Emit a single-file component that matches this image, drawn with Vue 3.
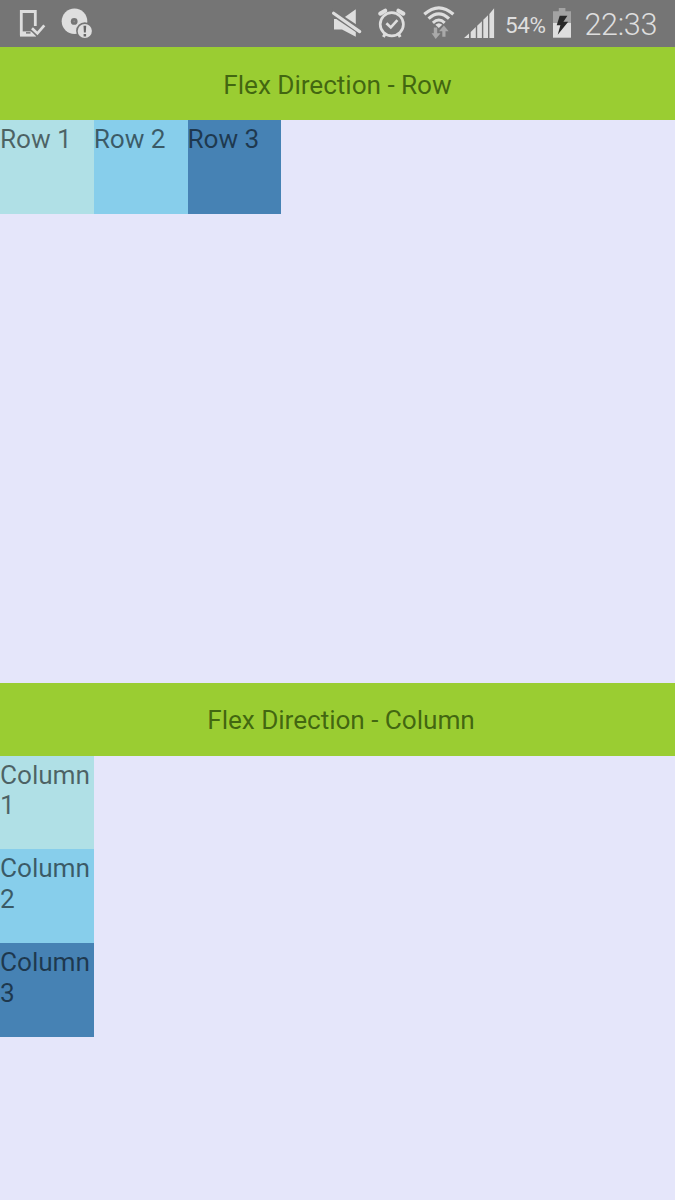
<script setup>
const boxes = [1, 2, 3]
</script>

<template>
  <div class="screen">
    <div class="status">
      <svg class="icons" width="500" height="47" viewBox="0 0 500 47">
        <g fill="none" stroke="#dedede">
          <path d="M21.3 35.2V11.5H35.3V26" stroke-width="2.8" />
          <path d="M20 34H36" stroke-width="5.2" />
          <path d="M32.2 28.2L37.4 33.4L44.2 25.4" stroke="#757575" stroke-width="6" />
          <path d="M32 28.2L37.4 33.4L44.3 25.3" stroke-width="2.7" />
        </g>
        <path d="M26 32.1H30.5V33.6H26Z" fill="#757575" />
        <circle cx="74.5" cy="21.3" r="12.8" fill="#dedede" />
        <circle cx="74.2" cy="21.4" r="3.4" fill="#757575" />
        <circle cx="74.2" cy="21.4" r="0.9" fill="#8d8d8d" />
        <circle cx="84.8" cy="31" r="8.7" fill="#757575" />
        <circle cx="84.8" cy="31" r="7.1" fill="#dedede" />
        <path d="M83.5 25.8H86.2L85.8 32.5H83.9Z M83.6 34H86.1V36.4H83.6Z" fill="#666" />

        <path d="M334 19H342L355.8 9.3V36.8L342 29.5H334Z" fill="#dedede" />
        <path d="M331 11.5L362 32.2" stroke="#757575" stroke-width="6.5" />
        <path d="M333.6 13.2L359.7 31.6" stroke="#dedede" stroke-width="3.2" stroke-linecap="round" />

        <g fill="none" stroke="#dedede">
          <circle cx="391.8" cy="24.3" r="11.6" stroke-width="2.7" />
          <path d="M386.4 23.2L390.8 27.4L397.4 20.2" stroke-width="2.6" />
          <path d="M380.3 13.6L385.2 10.8M398.4 10.8L403.3 13.6" stroke-width="4.2" stroke-linecap="round" />
          <path d="M385 34L383.4 37M398.6 34L400.2 37" stroke-width="3" />
          <path d="M424.3 14.3Q438.8 1.3 453.4 14.3" stroke-width="3.2" />
          <path d="M428.6 18.7Q438.8 9.1 449 18.7" stroke-width="3.2" />
          <path d="M432.9 22.8Q438.8 17.2 444.7 22.8" stroke-width="3" />
        </g>
        <path d="M435.3 24.8Q438.8 21.8 442.3 24.8L438.8 28Z" fill="#dedede" />
        <path d="M433.8 27.5H437.2V33.2H440.6L435.7 39L431.6 33.2H433.8Z M442.3 36.7V31.2H439L443.9 25.5L448.6 31.2H445.5V36.7Z" fill="#a9a9a9" />
        <path d="M464 38L469 33.4V38Z M470.7 32L475.8 27.1V38H470.7Z M477.2 25.7L481.9 21.2V38H477.2Z M483.3 19.8L488 15.3V38H483.3Z M489.4 13.9L494.1 8.3V38H489.4Z" fill="#dedede" />
      </svg>
      <span class="percent">54%</span>
      <svg class="battery" width="20" height="31" viewBox="552 8 20 31">
        <path d="M553 11.2H558.8V8H565.4V11.2H571V23H553Z" fill="#a3a3a3" />
        <path d="M553 23H571V37.7H553Z" fill="#dedede" />
        <path d="M559.7 15.8H567.4L563.4 21.8H568.2L557.7 34.8L560.4 25.3H556.7Z" fill="#292929" />
      </svg>
      <span class="clock">22:33</span>
    </div>
    <section class="row-section">
      <h1 class="heading">Flex Direction - Row</h1>
      <div class="row">
        <div v-for="n in boxes" :key="n" class="box" :class="'tone-' + n">Row {{ n }}</div>
      </div>
    </section>
    <section class="column-section">
      <h1 class="heading column-heading">Flex Direction - Column</h1>
      <div class="column">
        <div v-for="n in boxes" :key="n" class="box" :class="'tone-' + n">Column {{ n }}</div>
      </div>
    </section>
  </div>
</template>

<style>
body { margin: 0; }
</style>

<style scoped>
.screen {
  width: 675px;
  height: 1200px;
  overflow: hidden;
  display: flex;
  flex-direction: column;
  background: #e5e6fa;
  font-family: Roboto, sans-serif;
  color: rgba(0, 0, 0, 0.56);
}
.status {
  height: 47px;
  flex: none;
  display: flex;
  background: #757575;
  color: #dedede;
}
.icons { flex: none; }
.percent {
  width: 52px;
  padding-left: 5px;
  box-sizing: border-box;
  flex: none;
  font-size: 22.5px;
  line-height: 50px;
  letter-spacing: -0.4px;
}
.battery { flex: none; margin-top: 8px; }
.clock {
  margin-left: 12.5px;
  font-size: 30.5px;
  font-weight: 300;
  line-height: 49px;
  letter-spacing: -0.3px;
}
.row-section { height: 635.6px; flex: none; }
.column-section { flex: 1; }
.heading {
  margin: 0;
  height: 73px;
  box-sizing: border-box;
  padding-top: 2px;
  background: #9acd32;
  color: rgba(20, 50, 0, 0.66);
  font-size: 26.25px;
  font-weight: 400;
  line-height: 73px;
  letter-spacing: -0.08px;
  text-align: center;
}
.column-heading { padding-top: 1px; padding-left: 7px; }
.row { display: flex; }
.column { display: flex; flex-direction: column; }
.box {
  width: 93.75px;
  height: 93.75px;
  flex: none;
  box-sizing: border-box;
  padding-top: 4px;
  font-size: 26.25px;
  line-height: 30.5px;
  letter-spacing: -0.08px;
}
.tone-1 { background: #b0e0e6; }
.tone-2 { background: #87ceeb; }
.tone-3 { background: #4682b4; }
</style>
